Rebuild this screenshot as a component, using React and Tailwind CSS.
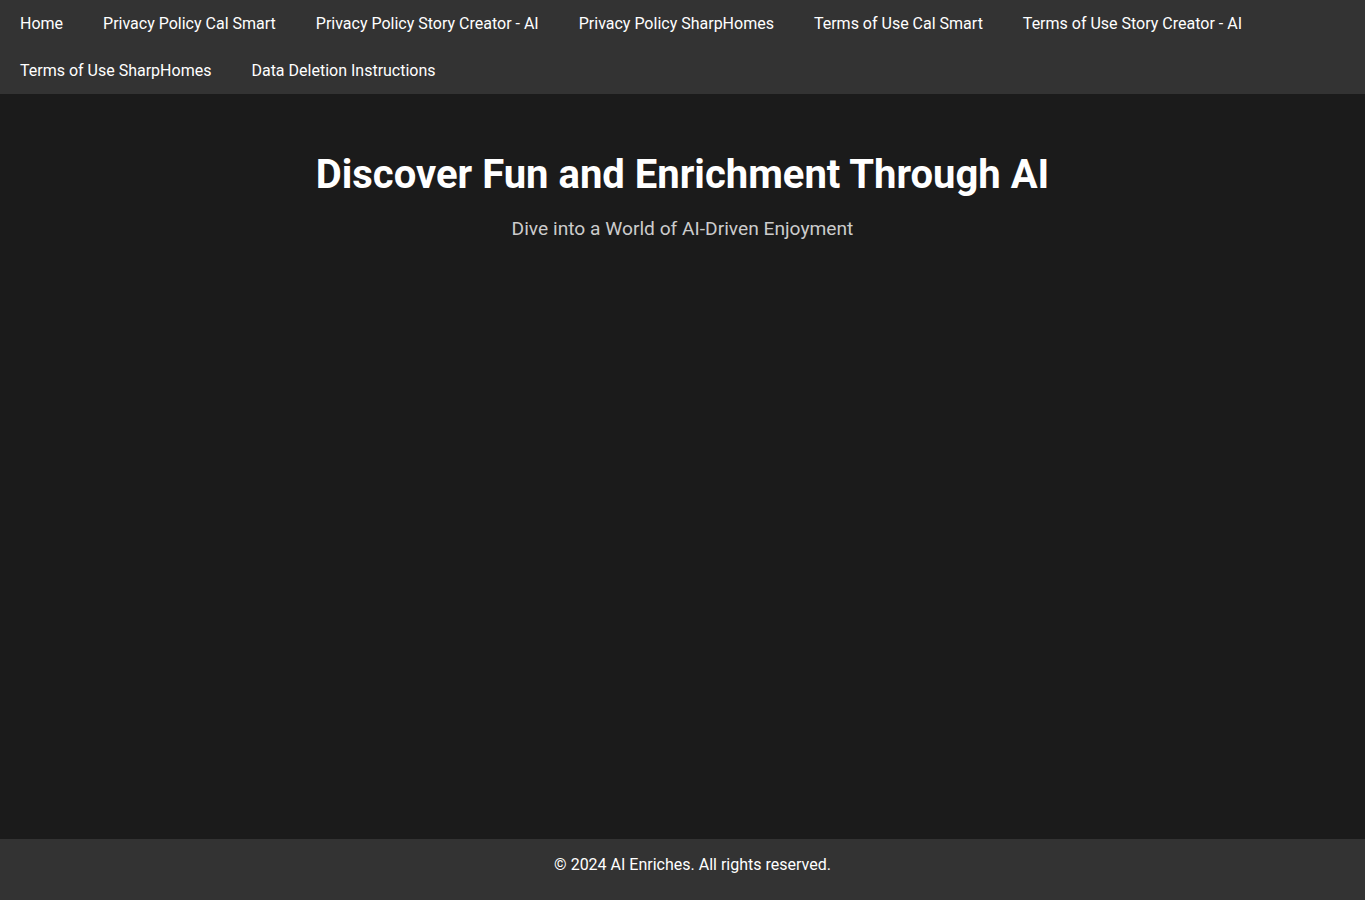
import React from "react";

const links = [
  "Home",
  "Privacy Policy Cal Smart",
  "Privacy Policy Story Creator - AI",
  "Privacy Policy SharpHomes",
  "Terms of Use Cal Smart",
  "Terms of Use Story Creator - AI",
  "Terms of Use SharpHomes",
  "Data Deletion Instructions",
];

export default function App() {
  return (
    <div
      className="min-h-screen flex flex-col bg-[#1b1b1b] text-white"
      style={{ fontFamily: "Roboto, 'Liberation Sans', sans-serif" }}
    >
      {/* top nav */}
      <nav className="bg-[#333333] flex flex-wrap">
        {links.map((label) => (
          <a
            key={label}
            href="#"
            className="px-5 py-[14px] text-[16px] leading-[19px] text-white"
          >
            {label}
          </a>
        ))}
      </nav>

      {/* hero */}
      <main className="flex-1 text-center pt-[57px]">
        <h1 className="text-[40px] leading-[47px] font-bold">
          Discover Fun and Enrichment Through AI
        </h1>
        <p className="mt-[19px] text-[19.2px] leading-[23px] text-[#cccccc]">
          Dive into a World of AI-Driven Enjoyment
        </p>
      </main>

      <footer className="bg-[#333333] text-center pl-5 pt-[15px] pb-[25px] text-[16px] leading-[21px]">
        © 2024 AI Enriches. All rights reserved.
      </footer>
    </div>
  );
}
